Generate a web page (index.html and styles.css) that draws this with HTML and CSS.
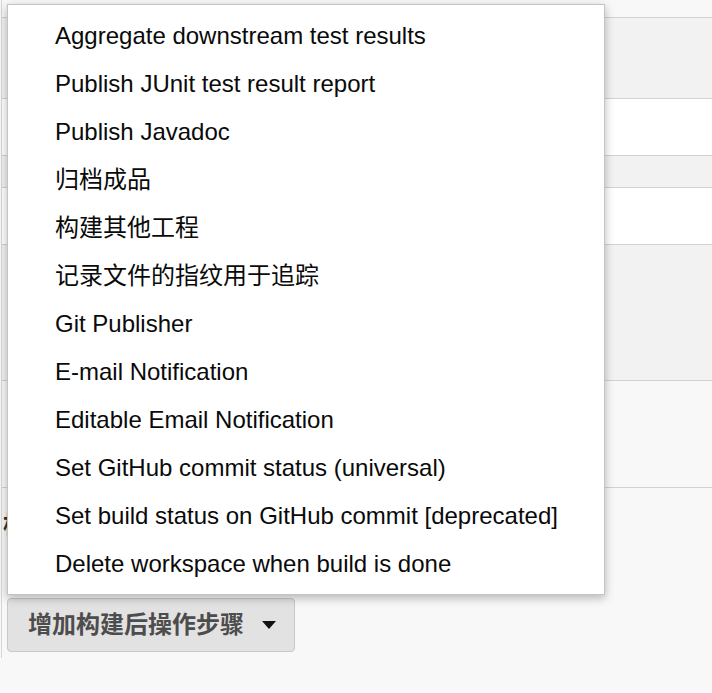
FILE: index.html
```html
<!DOCTYPE html>
<html lang="zh-CN">
<head>
<meta charset="utf-8">
<title>Jenkins</title>
<link rel="stylesheet" href="styles.css">
</head>
<body>
<div class="form">
  <div class="row r-top"></div>
  <div class="row band h80"></div>
  <div class="row white h56"></div>
  <div class="row band h31"></div>
  <div class="row white h56"></div>
  <div class="row band h135"></div>
  <div class="row plain h106"></div>
  <div class="row section">
    <div class="heading">构建后操作</div>
    <button class="add-btn"><span>增加构建后操作步骤</span><i class="caret"></i></button>
  </div>
</div>
<ul class="menu">
  <li>Aggregate downstream test results</li>
  <li>Publish JUnit test result report</li>
  <li>Publish Javadoc</li>
  <li>归档成品</li>
  <li>构建其他工程</li>
  <li>记录文件的指纹用于追踪</li>
  <li>Git Publisher</li>
  <li>E-mail Notification</li>
  <li>Editable Email Notification</li>
  <li>Set GitHub commit status (universal)</li>
  <li>Set build status on GitHub commit [deprecated]</li>
  <li>Delete workspace when build is done</li>
</ul>
</body>
</html>
```
FILE: styles.css
```css
html, body {
  margin: 0;
  padding: 0;
  background: #f8f8f8;
  font-family: "Liberation Sans", Arial, "Noto Sans CJK SC", sans-serif;
}
.form {
  border-left: 1px solid #d6d6d6;
  margin-left: 1px;
}
.row {
  border-top: 1px solid #d2d2d2;
}
.r-top {
  border-top: none;
  height: 17px;
  background: #f8f8f8;
}
.band { background: #f2f2f2; }
.white { background: #ffffff; }
.plain { background: #f8f8f8; }
.h80 { height: 80px; }
.h56 { height: 56px; }
.h31 { height: 31px; }
.h135 { height: 135px; }
.h106 { height: 106px; }
.section {
  padding: 23px 0 6px 5px;
  background: #f8f8f8;
}
.heading {
  font-size: 24px;
  line-height: 28px;
  font-weight: bold;
  color: #333;
  margin-left: -4px;
}
.add-btn {
  margin-top: 59px;
  display: flex;
  align-items: center;
  height: 54px;
  width: 288px;
  box-sizing: border-box;
  padding: 12px 18px 12px 20px;
  border: 1px solid #c8c8c8;
  border-radius: 4px;
  background: #e2e2e2;
  color: #4d4d4d;
  font-family: "Liberation Sans", Arial, "Noto Sans CJK SC", sans-serif;
  font-size: 24px;
  line-height: 28px;
  font-weight: bold;
}
.add-btn span { flex: 1; text-align: left; }
.caret {
  width: 0;
  height: 0;
  border-left: 7px solid transparent;
  border-right: 7px solid transparent;
  border-top: 8px solid #111;
}
.menu {
  position: absolute;
  left: 7px;
  top: 4px;
  width: 596px;
  margin: 0;
  padding: 7px 0 6px;
  list-style: none;
  background: #fff;
  border: 1px solid #c4c4c4;
  box-shadow: 0 3px 9px rgba(0, 0, 0, 0.28);
}
.menu li {
  height: 48px;
  line-height: 48px;
  padding-left: 47px;
  font-size: 24px;
  color: #0a0a0a;
  white-space: nowrap;
}
```
